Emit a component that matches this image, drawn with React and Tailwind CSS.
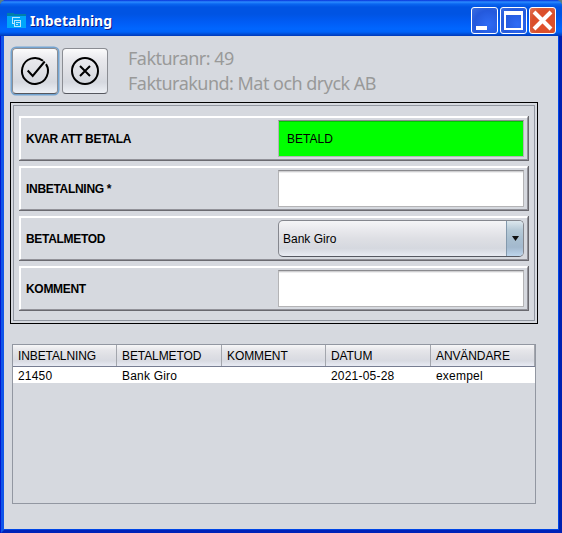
import React from 'react';

const columns = [
  { name: 'INBETALNING', value: '21450', width: 'w-[104px]' },
  { name: 'BETALMETOD', value: 'Bank Giro', width: 'w-[105px]' },
  { name: 'KOMMENT', value: '', width: 'w-[104px]' },
  { name: 'DATUM', value: '2021-05-28', width: 'w-[105px]' },
  { name: 'ANVÄNDARE', value: 'exempel', width: 'w-[104px]' },
];

function TitleBar() {
  const button =
    'flex h-[27px] w-[27px] items-center justify-center rounded-[3px] border border-white';
  const blue = ' bg-[radial-gradient(circle_at_65%_65%,#2f6cf5,#2459dc_60%,#3d6fe0)]';
  return (
    <header className="flex h-9 shrink-0 items-center rounded-t-[6px] bg-[linear-gradient(to_bottom,#0831d9_0px,#2b8bff_2px,#0a66f0_4px,#0054e3_7px,#0054e3_14px,#005cf5_22px,#0066ff_29px,#0062f8_32px,#0044c8_35px,#0038b8_36px)] pl-[7px] pr-[6px] pt-1">
      <svg width="19" height="15" viewBox="0 0 19 15" shapeRendering="crispEdges">
        <path d="M0 0h6l1 1h12v3H0z" fill="#007fa9" />
        <path d="M0 3h19v12H0z" fill="#00a5fa" />
        <path d="M12.500 4.500h-7v6h2M7.500 7.500h6v6h-6zM9 9.500h4M9 11.500h2" fill="none" stroke="#b5e6ff" />
      </svg>
      <h1 className="ml-[4px] mt-px flex-1 whitespace-nowrap font-['Noto_Sans',sans-serif] text-[14px] font-bold leading-5 tracking-[0.05px] text-white [text-shadow:1px_1px_0_#0a1883]">
        Inbetalning
      </h1>
      <div className="flex gap-[2px]">
        <button className={button + blue} aria-label="Minimera">
          <svg width="25" height="25" shapeRendering="crispEdges"><path d="M4 18h11v4H4z" fill="#fff" /></svg>
        </button>
        <button className={button + blue} aria-label="Maximera">
          <svg width="25" height="25" shapeRendering="crispEdges"><path fillRule="evenodd" d="M3 3h19v19H3zM5 7v13h15V7z" fill="#fff" /></svg>
        </button>
        <button className={button + ' bg-[radial-gradient(circle_at_60%_60%,#e4512c,#d9502c_60%,#e0775c)]'} aria-label="Stäng">
          <svg width="25" height="25"><path d="M4 4L21 21M21 4L4 21" stroke="#fff" strokeWidth="4" /></svg>
        </button>
      </div>
    </header>
  );
}

function Toolbar() {
  const face =
    'flex h-[46px] w-[46px] items-center justify-center rounded-[4px] border border-[#8b8d93] border-b-[#55575e] bg-[linear-gradient(to_bottom,#fbfbfc,#e8e8ec_25%,#dfe0e5_50%,#d5d8df_75%,#edf0f5)]';
  return (
    <div className="flex h-[54px]">
      <button className={face + ' shadow-[0_0_0_1.500px_#73a4d1]'} aria-label="Spara">
        <svg width="32" height="32" fill="none" stroke="#000" strokeWidth="2">
          <path d="M24 5.750A13 13 0 1 0 27 9.100" />
          <path d="M8.700 15.500l5 5.500L25.700 6.500" />
        </svg>
      </button>
      <button className={face + ' ml-1'} aria-label="Avbryt">
        <svg width="32" height="32" fill="none" stroke="#000" strokeWidth="2">
          <circle cx="16" cy="16" r="13" />
          <path d="M11 11l10 10M21 11L11 21" />
        </svg>
      </button>
      <div className="ml-[20px] -mt-[2px] whitespace-nowrap font-['Noto_Sans',sans-serif] text-[18px] leading-[25px] tracking-[-0.52px] text-[#999]">
        <p><span>Fakturanr: 49</span></p>
        <p><span>Fakturakund: Mat och dryck AB</span></p>
      </div>
    </div>
  );
}

function Row({ label, children }) {
  return (
    <div className="h-[45px] border-b border-r border-[#69696f]">
      <div className="flex h-full justify-between border-2 border-b border-r border-white border-b-[#929299] border-r-[#929299] pl-[5px] pr-[3px] pt-[2px]">
        <label className="pt-[11px] text-[12px] font-bold leading-4 tracking-[-0.3px]"><span>{label}</span></label>
        {children}
      </div>
    </div>
  );
}

function Field({ paid, children }) {
  return (
    <div
      className={
        'h-[37px] w-[246px] border border-[#b4b4b6] border-t-[#8b8b8f] pl-2 pt-[10px] leading-4 ' +
        (paid
          ? 'bg-[#00ff00] shadow-[inset_0_1px_0_#00c800]'
          : 'bg-white shadow-[inset_0_1px_0_#cfcfd1,inset_0_2px_0_#eeeeef]')
      }
    >
      {children}
    </div>
  );
}

export default function App() {
  return (
    <div className="h-[533px] w-[562px] overflow-hidden bg-[#5a7e84] font-['Liberation_Sans',Arial,sans-serif] text-[12px] text-black">
      <div className="flex h-full flex-col rounded-t-[7px] bg-[#0046e0] shadow-[inset_1px_0_0_#0019cf]">
        <TitleBar />
        <main className="ml-px flex-1 border-x-[3px] border-b-[3px] border-b-[#0022b8] border-l-[#0f55ea] border-r-[#0020b0] bg-[#d6d9df] pl-[6px] pr-[20px] pt-3 shadow-[inset_0_-1px_0_#0046e6,inset_-1px_0_0_#0046e6]">
          <div className="pl-[2px]"><Toolbar /></div>
          <section className="h-[222px] w-[528px] border border-black p-[2px]">
            <div className="flex h-full flex-col gap-[5px] border border-[#9297a1] pl-[5px] pr-[5px] pt-[10px]">
              <Row label="KVAR ATT BETALA"><Field paid>BETALD</Field></Row>
              <Row label="INBETALNING *"><Field /></Row>
              <Row label="BETALMETOD">
                <div className="flex h-[37px] w-[246px] overflow-hidden rounded-[5px] border border-[#85878e] border-b-[#565962] bg-[linear-gradient(to_bottom,#f5f5f7,#e9e9ed_25%,#dedfe4_50%,#d5d8df_78%,#e9ecf3)]">
                  <span className="flex-1 pl-1 pt-[10px] leading-4">Bank Giro</span>
                  <span className="flex w-[17px] items-center justify-center border-l border-[#8399ad] bg-[linear-gradient(to_bottom,#dce7ed,#b7cad7_25%,#a9bfd0_50%,#a3b9ce_75%,#bdd5ec)]">
                    <svg width="7" height="5"><path d="M0 0h7L3.500 5z" fill="#111" /></svg>
                  </span>
                </div>
              </Row>
              <Row label="KOMMENT"><Field /></Row>
            </div>
          </section>
          <section className="ml-[2px] mt-5 h-[160px] w-[524px] border border-[#9297a1]">
            <div className="flex h-[22px] border-b border-[#777d91] bg-[linear-gradient(to_bottom,#f7f7f8,#e6e6ea_25%,#dedfe4_50%,#d8dae1_75%,#e8ebf4)]">
              {columns.map((c) => (
                <div key={c.name} className={c.width + ' border-r border-[#a3a6ad] pl-[5px] pt-[3px] leading-4 tracking-[-0.1px]'}><span>{c.name}</span></div>
              ))}
            </div>
            <div className="flex h-4 bg-white">
              {columns.map((c) => (
                <div key={c.name} className={c.width + ' pl-[5px] pt-px leading-4 tracking-[0.2px]'}><span>{c.value}</span></div>
              ))}
            </div>
          </section>
        </main>
      </div>
    </div>
  );
}
